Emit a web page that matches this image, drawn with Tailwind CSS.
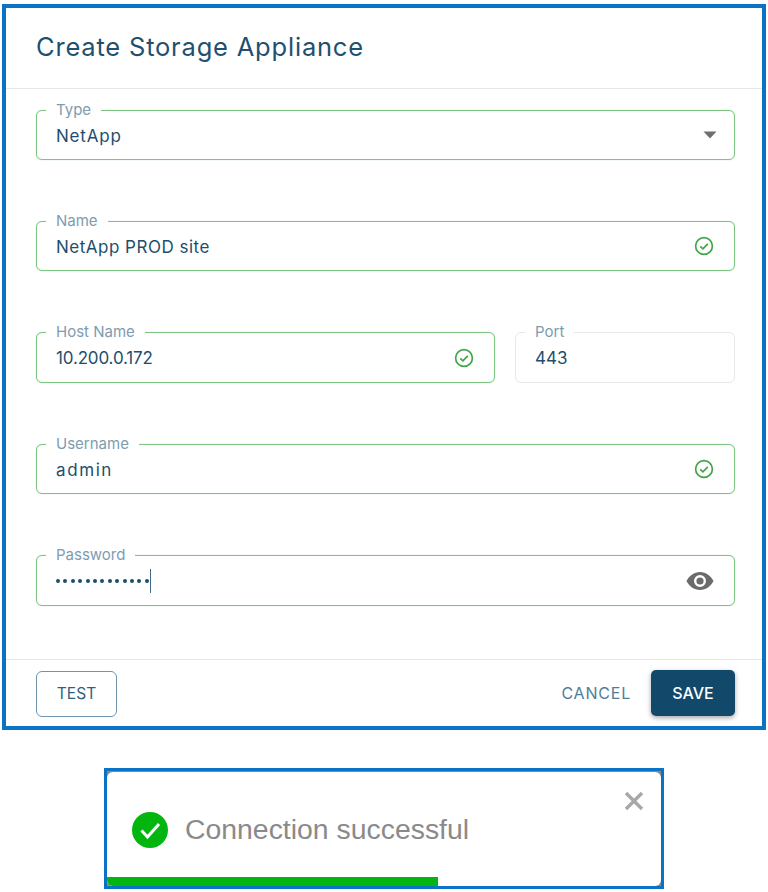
<!doctype html>
<html>
<head>
<meta charset="utf-8">
<script src="https://cdn.jsdelivr.net/npm/@tailwindcss/browser@4"></script>
</head>
<body class="bg-white">
<div class="w-[768px] h-[892px] pt-[4px] pl-[2px] font-['Inter','Noto_Sans',sans-serif] text-[#1e4e6e] overflow-hidden">
  <!-- Dialog -->
  <div class="w-[764px] h-[726px] border-4 border-[#0a73c4] flex flex-col bg-white">
    <div class="h-[81px] border-b border-[#e6e6e6] pl-[30px] pt-[23px] shrink-0">
      <h1 class="text-[25.5px] leading-[32px] tracking-[0.8px] text-[#1f506f]">Create Storage Appliance</h1>
    </div>

    <div class="flex-1 pt-[21px] pl-[30px] pr-[27px] flex flex-col gap-[61px]">
      <!-- Type -->
      <div class="relative h-[50px] border border-[#7cc480] shadow-[0_0_1px_#8ccc90] rounded-[6px] flex items-center pl-[19px] pr-[16px] justify-between">
        <span class="absolute -top-[9px] left-[9px] bg-white px-[10px] text-[15px] leading-[16px] text-[#7d9cb0]">Type</span>
        <span class="text-[17px] tracking-[0.8px] pt-[3px]">NetApp</span>
        <svg class="w-[16px] h-[8px]" viewBox="0 0 16 8"><path d="M1.5 0.5h13L8 7.5z" fill="#6f6f6f"/></svg>
      </div>

      <!-- Name -->
      <div class="relative h-[50px] border border-[#7cc480] shadow-[0_0_1px_#8ccc90] rounded-[6px] flex items-center pl-[19px] pr-[20px] justify-between">
        <span class="absolute -top-[9px] left-[9px] bg-white px-[10px] text-[15px] leading-[16px] text-[#7d9cb0]">Name</span>
        <span class="text-[17px] tracking-[0.5px] pt-[3px]">NetApp PROD site</span>
        <svg class="w-[20px] h-[20px]" viewBox="0 0 20 20" fill="none" stroke="#43a547"><circle cx="10" cy="10" r="8.4" stroke-width="1.7"/><path d="M6.3 10.3l2.6 2.5 4.9-5" stroke-width="1.7"/></svg>
      </div>

      <!-- Host / Port -->
      <div class="flex gap-[20px] h-[51px]">
        <div class="relative w-[459px] border border-[#7cc480] shadow-[0_0_1px_#8ccc90] rounded-[6px] flex items-center pl-[19px] pr-[20px] justify-between">
          <span class="absolute -top-[9px] left-[9px] bg-white px-[10px] text-[15px] leading-[16px] text-[#7d9cb0]">Host Name</span>
          <span class="text-[17px] tracking-[-0.15px] pt-[3px]">10.200.0.172</span>
          <svg class="w-[20px] h-[20px]" viewBox="0 0 20 20" fill="none" stroke="#43a547"><circle cx="10" cy="10" r="8.4" stroke-width="1.7"/><path d="M6.3 10.3l2.6 2.5 4.9-5" stroke-width="1.7"/></svg>
        </div>
        <div class="relative flex-1 border border-[#e8e8e8] rounded-[6px] flex items-center pl-[19px]">
          <span class="absolute -top-[9px] left-[9px] bg-white px-[10px] text-[15px] leading-[16px] text-[#7d9cb0]">Port</span>
          <span class="text-[17px] pt-[3px]">443</span>
        </div>
      </div>

      <!-- Username -->
      <div class="relative h-[50px] border border-[#7cc480] shadow-[0_0_1px_#8ccc90] rounded-[6px] flex items-center pl-[19px] pr-[20px] justify-between">
        <span class="absolute -top-[9px] left-[9px] bg-white px-[10px] text-[15px] leading-[16px] text-[#7d9cb0]">Username</span>
        <span class="text-[17px] tracking-[1.6px] pt-[3px]">admin</span>
        <svg class="w-[20px] h-[20px]" viewBox="0 0 20 20" fill="none" stroke="#43a547"><circle cx="10" cy="10" r="8.4" stroke-width="1.7"/><path d="M6.3 10.3l2.6 2.5 4.9-5" stroke-width="1.7"/></svg>
      </div>

      <!-- Password -->
      <div class="relative h-[51px] border border-[#7cc480] shadow-[0_0_1px_#8ccc90] rounded-[6px] flex items-center pl-[19px] pr-[20px] justify-between">
        <span class="absolute -top-[9px] left-[9px] bg-white px-[10px] text-[15px] leading-[16px] text-[#7d9cb0]">Password</span>
        <div class="flex items-center">
          <span class="flex gap-[3.4px]">
            <i class="w-[4px] h-[4px] rounded-full bg-[#1e4e6e]"></i><i class="w-[4px] h-[4px] rounded-full bg-[#1e4e6e]"></i><i class="w-[4px] h-[4px] rounded-full bg-[#1e4e6e]"></i><i class="w-[4px] h-[4px] rounded-full bg-[#1e4e6e]"></i><i class="w-[4px] h-[4px] rounded-full bg-[#1e4e6e]"></i><i class="w-[4px] h-[4px] rounded-full bg-[#1e4e6e]"></i><i class="w-[4px] h-[4px] rounded-full bg-[#1e4e6e]"></i><i class="w-[4px] h-[4px] rounded-full bg-[#1e4e6e]"></i><i class="w-[4px] h-[4px] rounded-full bg-[#1e4e6e]"></i><i class="w-[4px] h-[4px] rounded-full bg-[#1e4e6e]"></i><i class="w-[4px] h-[4px] rounded-full bg-[#1e4e6e]"></i><i class="w-[4px] h-[4px] rounded-full bg-[#1e4e6e]"></i><i class="w-[4px] h-[4px] rounded-full bg-[#1e4e6e]"></i>
          </span>
          <span class="w-px h-[24px] bg-[#3d6a88] ml-[1px]"></span>
        </div>
        <svg class="w-[28px] h-[20px]" viewBox="0 0 28 20"><path fill-rule="evenodd" fill="#6b6b6b" d="M14 1C8 1 3 5 .5 10 3 15 8 19 14 19s11-4 13.5-9C25 5 20 1 14 1zm0 15a6 6 0 1 1 0-12 6 6 0 0 1 0 12z"/><circle cx="14" cy="10" r="3.6" fill="#6b6b6b"/></svg>
      </div>
    </div>

    <!-- Footer -->
    <div class="h-[67px] border-t border-[#e6e6e6] shrink-0 pl-[30px] pr-[27px] flex items-start justify-between pt-[10px]">
      <button class="w-[81px] h-[46px] mt-px border border-[#6f95ad] rounded-[6px] text-[15.5px] text-[#2f5f7e]">TEST</button>
      <div class="flex items-center gap-[20px]">
        <span class="text-[16px] tracking-[0.8px] text-[#4f7d99]">CANCEL</span>
        <button class="w-[84px] h-[46px] rounded-[5px] bg-[#124869] text-white text-[16px] font-medium shadow-[0_2px_5px_rgba(0,0,0,0.35)]">SAVE</button>
      </div>
    </div>
  </div>

  <!-- Toast -->
  <div class="w-[560px] h-[121px] ml-[102px] mt-[38px] border-[3px] border-[#0a73c4] bg-[#8a8a8a] font-['Liberation_Sans',sans-serif]">
    <div class="relative w-full h-[114px] mt-px rounded-[6px] bg-white overflow-hidden flex items-center pl-[25px] pt-[2px]">
      <svg class="w-[36px] h-[36px] shrink-0" viewBox="0 0 36 36"><circle cx="18" cy="18" r="18" fill="#03b60f"/><path d="M9.5 18.5l6 6.5 11.5-13" fill="none" stroke="#fff" stroke-width="3"/></svg>
      <span class="ml-[17px] mb-[2px] text-[28.4px] leading-[32px] text-[#8a8a8a]">Connection successful</span>
      <svg class="absolute top-[19px] right-[17px] w-[20px] h-[20px]" viewBox="0 0 20 20"><path d="M2 2l16 16M18 2L2 18" stroke="#a8a8a8" stroke-width="3.4"/></svg>
      <div class="absolute left-0 bottom-0 w-[331px] h-[9px] bg-[#03b60f]"></div>
    </div>
  </div>
</div>
</body>
</html>
